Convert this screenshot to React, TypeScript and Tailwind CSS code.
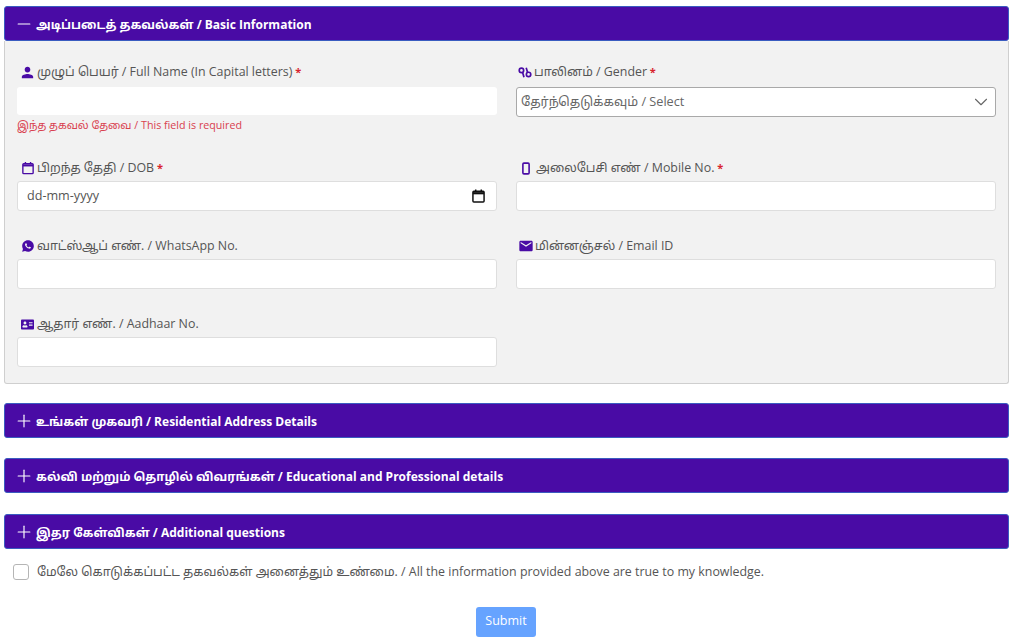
import { MdPerson, MdEmail } from "react-icons/md"
import { RiWhatsappFill } from "react-icons/ri"
import { FaAddressCard } from "react-icons/fa"
import { ChevronDown, Plus, Minus } from "lucide-react"

const purple = "text-[#490ba5]"

const Req = () => <span className="text-[11px] font-bold text-[#d9232e]"> *</span>

const GenderIcon = () => (
  <svg viewBox="0 0 16 13" className="mr-[1px] h-[11px] w-[14px] fill-none stroke-[#490ba5] stroke-[2]">
    <circle cx="3.8" cy="4" r="2.6" />
    <path d="M5.2 6.5l1.6 5.5" />
    <circle cx="12.2" cy="8.8" r="2.6" />
    <path d="M11 6.2L9.4 1" />
  </svg>
)

const CalendarIcon = ({ className }: { className: string }) => (
  <svg viewBox="0 0 14 15" className={className} fill="none" stroke="currentColor">
    <rect x="1" y="2.5" width="12" height="11.5" rx="1" strokeWidth="1.6" />
    <path d="M1 4.5h12" strokeWidth="2.4" />
    <path d="M4 .5v2M10 .5v2" strokeWidth="1.6" />
  </svg>
)

const PhoneIcon = () => (
  <svg viewBox="0 0 9 14" className="mr-[5px] ml-[4px] h-[13px] w-[8px] fill-none stroke-[#490ba5]">
    <rect x="1" y="1" width="7" height="12" rx="1.2" strokeWidth="1.8" />
  </svg>
)

const Header = ({ open, title }: { open?: boolean; title: string }) => (
  <div className="flex h-[35px] items-center gap-[2px] rounded-[3px] border border-[#3a5cc0] bg-[#490ba5] pl-[9px] text-[12px] font-bold text-white">
    {open ? <Minus size={20} strokeWidth={1.4} /> : <Plus size={20} strokeWidth={1.4} />}
    <span className="pt-[2px]">{title}</span>
  </div>
)

const Label = ({ icon, children, first }: { icon: React.ReactNode; children: React.ReactNode; first?: boolean }) => (
  <div className={`flex h-5 items-center gap-[1px] pl-[2px] text-[12.4px] text-[#555555] ${first ? "mb-[5px]" : "mb-[3px]"}`}>
    {icon}
    <span className="whitespace-pre">{children}</span>
  </div>
)

const Input = () => (
  <input className="block h-[30px] w-full rounded-[3px] border border-[#dedede] bg-white outline-none" />
)

export default function App() {
  return (
    <div className="h-[639px] w-[1024px] overflow-hidden bg-white pt-[6px] pr-[15px] pl-1 font-['Open_Sans','Noto_Sans','Noto_Sans_Tamil',sans-serif]">
      <Header open title="அடிப்படைத் தகவல்கள் / Basic Information" />
      <div className="grid grid-cols-2 gap-x-[19px] gap-y-[25px] rounded-b-[3px] border border-t-0 border-[#cfcfcf] bg-[#f2f2f2] pt-[21px] pr-[12px] pb-[16px] pl-[12px]">
        <div>
          <Label first icon={<MdPerson size={17} className={purple} />}>
            முழுப் பெயர் / Full Name (In Capital letters)<Req />
          </Label>
          <input className="block h-[28px] w-full rounded-[3px] bg-white outline-none" />
          <p className="mt-[2px] h-4 text-[10.7px] leading-4 text-[#d9414f]">இந்த தகவல் தேவை / This field is required</p>
        </div>
        <div>
          <Label first icon={<GenderIcon />}>
            பாலினம் / Gender<Req />
          </Label>
          <div className="flex h-[30px] items-center justify-between rounded-[3px] border border-[#a9a9a9] bg-white pr-[3px] pl-[4px] text-[12.7px] text-[#666666]">
            <span>தேர்ந்தெடுக்கவும் / Select</span>
            <ChevronDown size={22} strokeWidth={1.2} className="text-[#666666]" />
          </div>
        </div>
        <div>
          <Label icon={<span className="flex w-[17px] justify-center"><CalendarIcon className={`h-[14px] w-[12px] ${purple}`} /></span>}>
            பிறந்த தேதி / DOB<Req />
          </Label>
          <div className="flex h-[30px] items-center justify-between rounded-[3px] border border-[#dedede] bg-white pr-[11px] pl-[9px] text-[12.6px] text-[#555555]">
            <span>dd-mm-yyyy</span>
            <CalendarIcon className="h-[14px] w-[13px] text-[#111111]" />
          </div>
        </div>
        <div>
          <Label icon={<PhoneIcon />}>
            அலைபேசி எண் / Mobile No.<Req />
          </Label>
          <Input />
        </div>
        <div>
          <Label icon={<span className="flex w-[17px] justify-center"><RiWhatsappFill size={14} className={purple} /></span>}>
            வாட்ஸ்ஆப் எண். / WhatsApp No.
          </Label>
          <Input />
        </div>
        <div>
          <Label icon={<MdEmail size={16} className={purple} />}>மின்னஞ்சல் / Email ID</Label>
          <Input />
        </div>
        <div>
          <Label icon={<span className="flex w-[17px] justify-center"><FaAddressCard size={13} className={purple} /></span>}>
            ஆதார் எண். / Aadhaar No.
          </Label>
          <Input />
        </div>
      </div>
      <div className="mt-[19px] flex flex-col gap-5">
        <Header title="உங்கள் முகவரி / Residential Address Details" />
        <Header title="கல்வி மற்றும் தொழில் விவரங்கள் / Educational and Professional details" />
        <div className="pt-[1px]">
          <Header title="இதர கேள்விகள் / Additional questions" />
        </div>
      </div>
      <div className="mt-[14px] flex items-center gap-[8px] pl-[9px] text-[12.4px] text-[#555555]">
        <span className="h-4 w-4 rounded-[3px] border border-[#b5b5b5] bg-white" />
        <span>மேலே கொடுக்கப்பட்ட தகவல்கள் அனைத்தும் உண்மை. / All the information provided above are true to my knowledge.</span>
      </div>
      <div className="mt-[25px] flex justify-center pr-[1px]">
        <button className="h-[30px] w-[60px] rounded-[3px] bg-[#66a3ff] text-[12.5px] font-medium text-white">Submit</button>
      </div>
    </div>
  )
}
